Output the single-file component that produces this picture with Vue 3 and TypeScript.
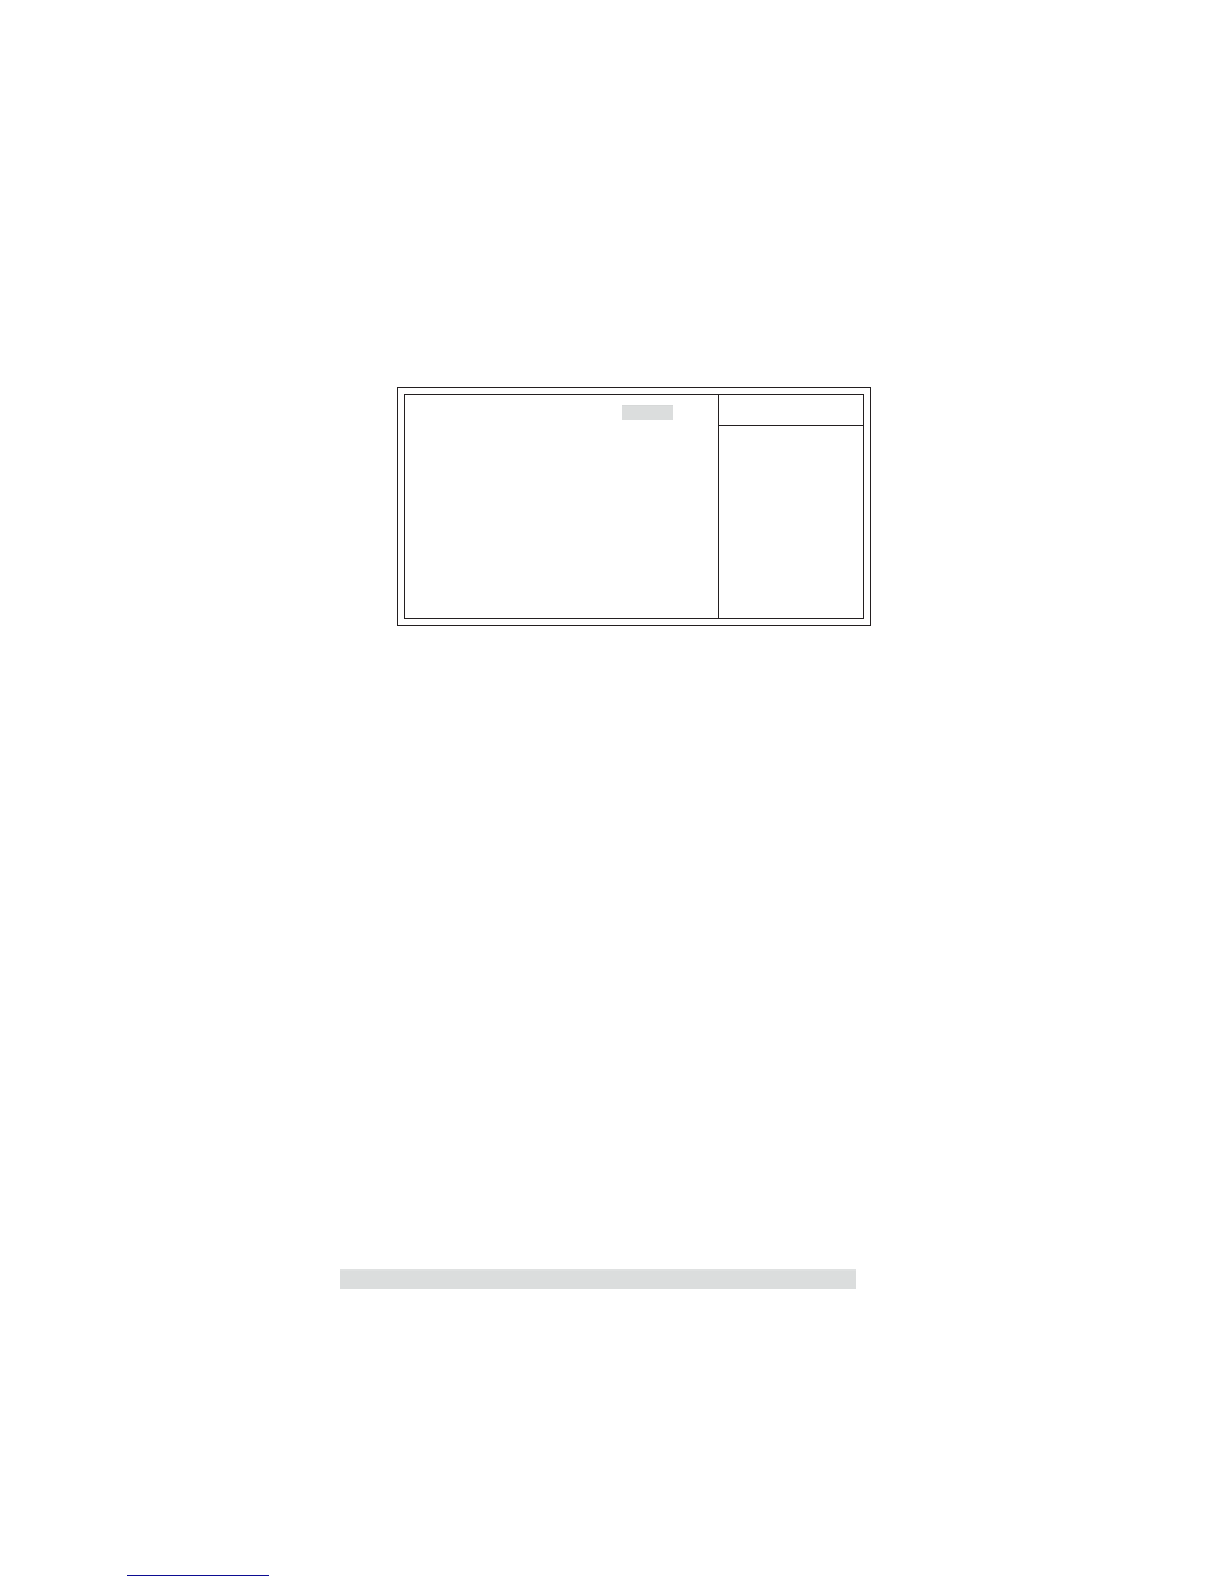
<script setup lang="ts">
</script>

<template>
  <main class="page">
    <div class="row">
      <section class="frame">
        <div class="screen">
          <div class="settings">
            <div class="selected"></div>
          </div>
          <aside class="help">
            <header class="help-title"></header>
            <div class="help-body"></div>
          </aside>
        </div>
      </section>
    </div>
    <div class="row note-row">
      <div class="note"></div>
    </div>
    <footer class="row footer">
      <hr class="rule" />
    </footer>
  </main>
</template>

<style>
body {
  margin: 0;
  background: #ffffff;
}
</style>

<style scoped>
.page {
  box-sizing: border-box;
  min-height: 100vh;
  display: flex;
  flex-direction: column;
  padding: 387px 0 8px;
}

.row {
  display: grid;
  grid-template-columns: 397fr 474fr 353fr;
}

.frame {
  grid-column: 2;
  border: 1px solid #231f20;
  padding: 6px;
}

.screen {
  border: 1px solid #231f20;
  display: grid;
  grid-template-columns: 313fr 145fr;
}

.settings {
  display: grid;
  grid-template-columns: 217fr 51fr 45fr;
  align-content: start;
  padding-top: 10px;
}

.selected {
  box-sizing: border-box;
  grid-column: 2;
  height: 15px;
  background: #dbdddd;
  border-top: 1px solid #d6d8d8;
}

.help {
  border-left: 1px solid #231f20;
}

.help-title {
  height: 30px;
  border-bottom: 1px solid #231f20;
}

.help-body {
  height: 192px;
}

.note-row {
  grid-template-columns: 340fr 516fr 368fr;
  margin-top: 643px;
}

.note {
  box-sizing: border-box;
  grid-column: 2;
  height: 20px;
  background: #dbdddd;
  border-top: 2px solid #dfe1e1;
}

.footer {
  grid-template-columns: 127fr 142fr 955fr;
  margin-top: auto;
}

.rule {
  grid-column: 2;
  width: 100%;
  height: 1px;
  margin: 0;
  border: 0;
  background: #0c0c92;
}
</style>
